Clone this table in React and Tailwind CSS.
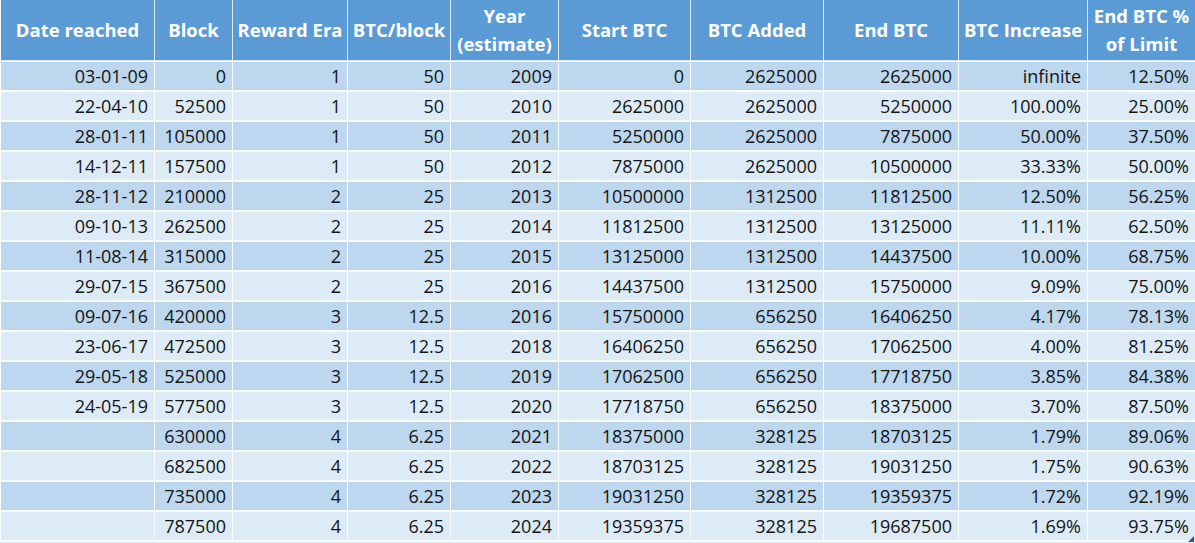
import React from "react";

const headers = [
  ["Date reached"],
  ["Block"],
  ["Reward Era"],
  ["BTC/block"],
  ["Year", "(estimate)"],
  ["Start BTC"],
  ["BTC Added"],
  ["End BTC"],
  ["BTC Increase"],
  ["End BTC %", "of Limit"],
];

const widths = [154, 78, 115, 103, 108, 132, 133, 135, 129, 108];

const rows = [
  ["03-01-09", "0", "1", "50", "2009", "0", "2625000", "2625000", "infinite", "12.50%"],
  ["22-04-10", "52500", "1", "50", "2010", "2625000", "2625000", "5250000", "100.00%", "25.00%"],
  ["28-01-11", "105000", "1", "50", "2011", "5250000", "2625000", "7875000", "50.00%", "37.50%"],
  ["14-12-11", "157500", "1", "50", "2012", "7875000", "2625000", "10500000", "33.33%", "50.00%"],
  ["28-11-12", "210000", "2", "25", "2013", "10500000", "1312500", "11812500", "12.50%", "56.25%"],
  ["09-10-13", "262500", "2", "25", "2014", "11812500", "1312500", "13125000", "11.11%", "62.50%"],
  ["11-08-14", "315000", "2", "25", "2015", "13125000", "1312500", "14437500", "10.00%", "68.75%"],
  ["29-07-15", "367500", "2", "25", "2016", "14437500", "1312500", "15750000", "9.09%", "75.00%"],
  ["09-07-16", "420000", "3", "12.5", "2016", "15750000", "656250", "16406250", "4.17%", "78.13%"],
  ["23-06-17", "472500", "3", "12.5", "2018", "16406250", "656250", "17062500", "4.00%", "81.25%"],
  ["29-05-18", "525000", "3", "12.5", "2019", "17062500", "656250", "17718750", "3.85%", "84.38%"],
  ["24-05-19", "577500", "3", "12.5", "2020", "17718750", "656250", "18375000", "3.70%", "87.50%"],
  ["", "630000", "4", "6.25", "2021", "18375000", "328125", "18703125", "1.79%", "89.06%"],
  ["", "682500", "4", "6.25", "2022", "18703125", "328125", "19031250", "1.75%", "90.63%"],
  ["", "735000", "4", "6.25", "2023", "19031250", "328125", "19359375", "1.72%", "92.19%"],
  ["", "787500", "4", "6.25", "2024", "19359375", "328125", "19687500", "1.69%", "93.75%"],
];

export default function App() {
  return (
    <div className="relative w-[1195px] h-[543px] overflow-hidden bg-[#ddebf7] font-['Open_Sans',sans-serif]">
      <table className="w-[1195px] table-fixed border-collapse">
        <colgroup>
          {widths.map((w, i) => (
            <col key={i} style={{ width: w }} />
          ))}
        </colgroup>
        <thead>
          <tr className="h-[61px] bg-[#5b9bd5]">
            {headers.map((h, i) => (
              <th
                key={i}
                className="border-x border-b-2 border-white/80 px-1 text-center align-middle text-[18.5px] font-bold leading-[28px] text-white"
              >
                {h.map((line, j) => (
                  <div key={j} className="whitespace-nowrap">{line}</div>
                ))}
              </th>
            ))}
          </tr>
        </thead>
        <tbody>
          {rows.map((r, ri) => (
            <tr key={ri} className={ri % 2 === 0 ? "h-[30px] bg-[#bdd7ee]" : "h-[30px] bg-[#ddebf7]"}>
              {r.map((c, ci) => (
                <td
                  key={ci}
                  className="border-x border-b-2 border-white/90 p-0 pr-[6px] text-right align-middle text-[18px] leading-[28px] whitespace-nowrap text-[#141414]"
                >
                  {c}
                </td>
              ))}
            </tr>
          ))}
        </tbody>
      </table>
      <svg className="absolute right-[1px] bottom-[1px]" width="6" height="6" viewBox="0 0 6 6">
        <polygon points="6,0 6,6 0,6" fill="#2f5597" />
      </svg>
    </div>
  );
}
